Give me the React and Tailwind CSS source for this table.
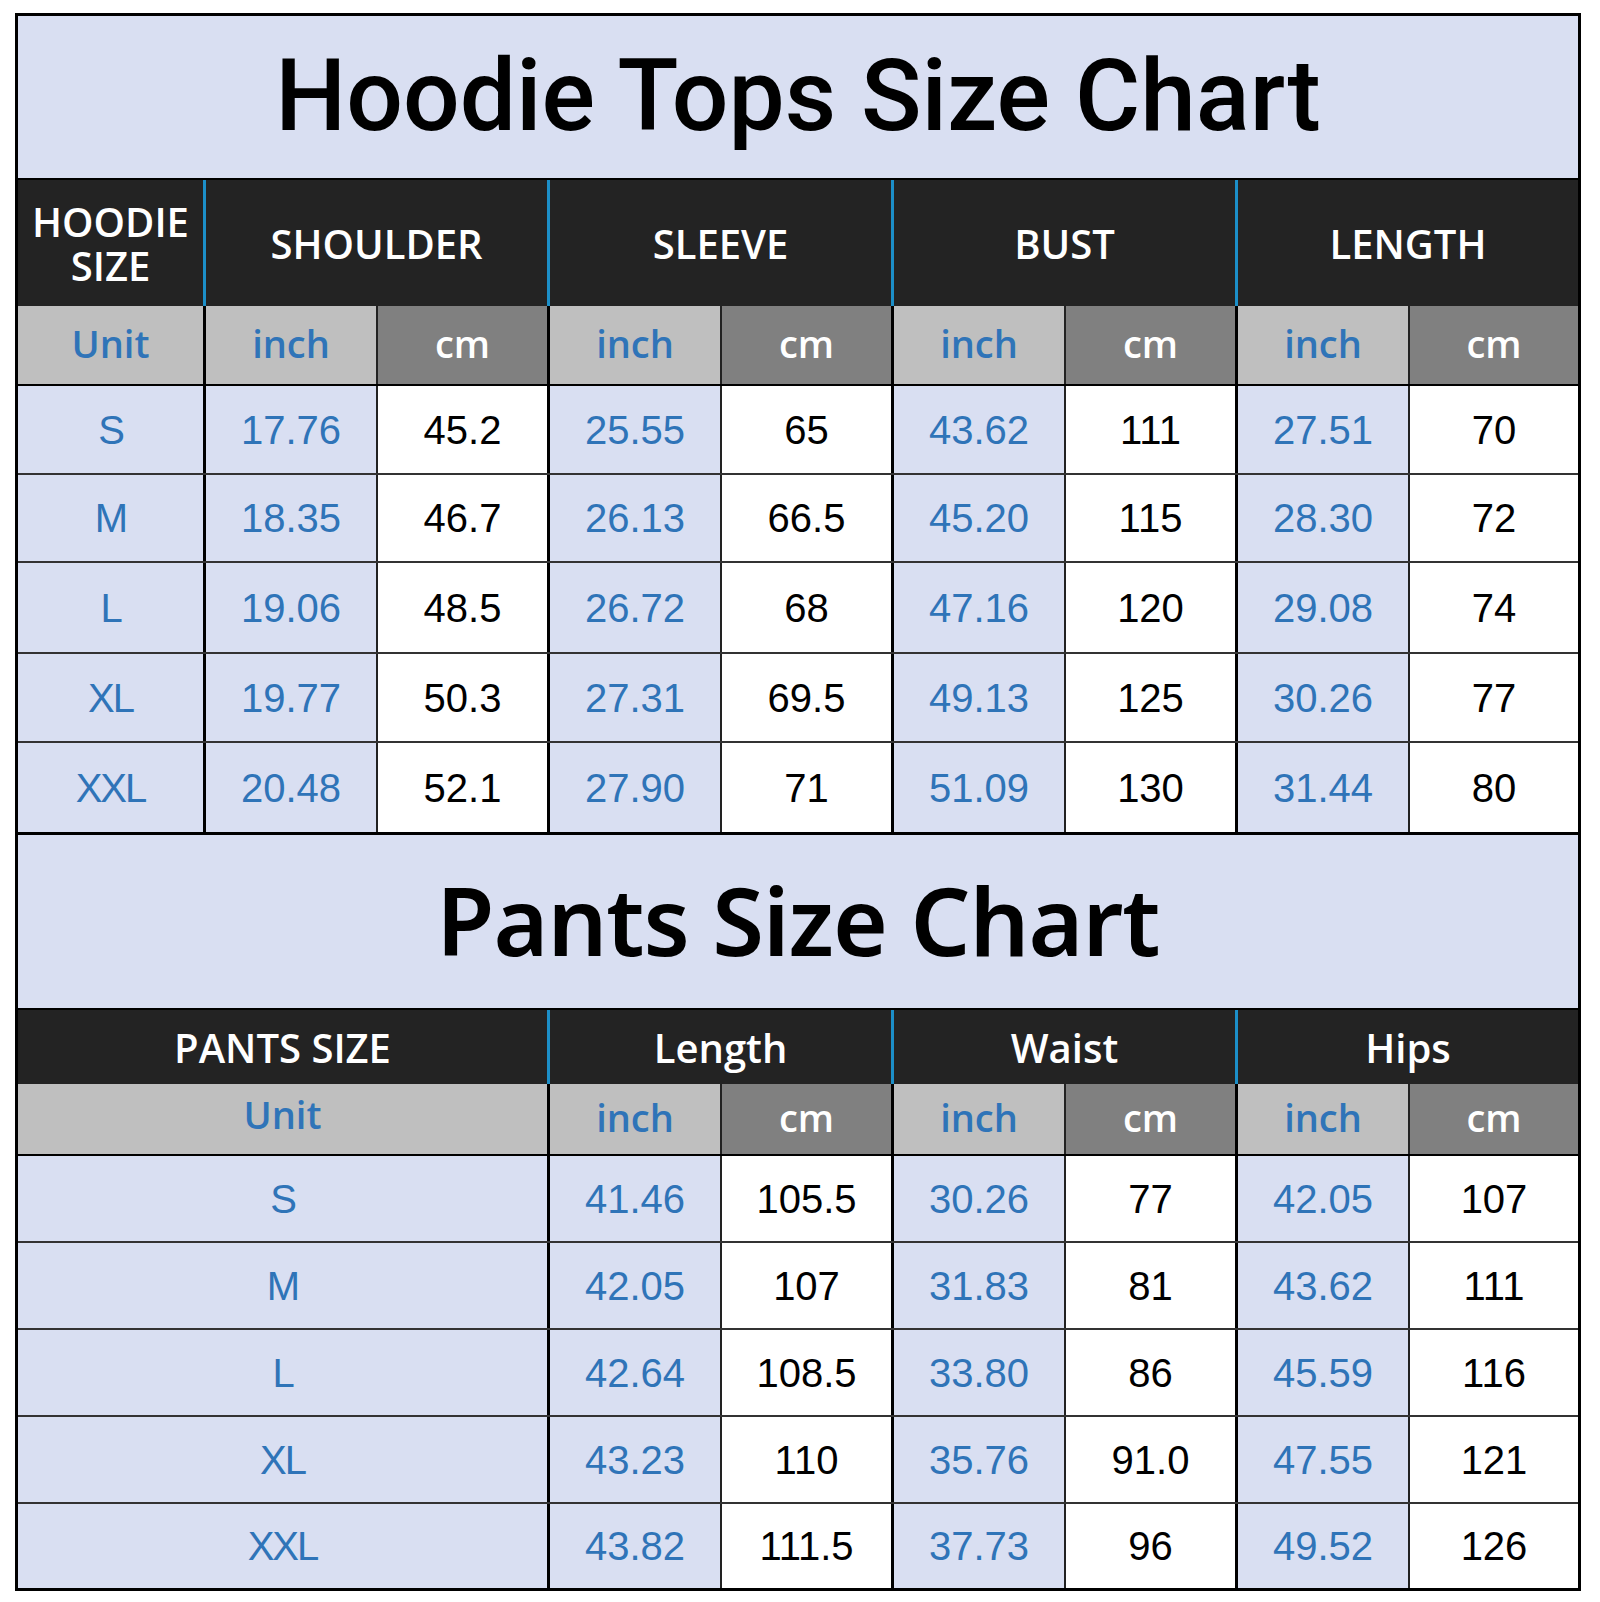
import React from "react";

const COLS =
  "grid grid-cols-[188px_172px_172px_172px_172px_172px_172px_172px_168px]";

const hoodie = [
  ["S", "17.76", "45.2", "25.55", "65", "43.62", "111", "27.51", "70"],
  ["M", "18.35", "46.7", "26.13", "66.5", "45.20", "115", "28.30", "72"],
  ["L", "19.06", "48.5", "26.72", "68", "47.16", "120", "29.08", "74"],
  ["XL", "19.77", "50.3", "27.31", "69.5", "49.13", "125", "30.26", "77"],
  ["XXL", "20.48", "52.1", "27.90", "71", "51.09", "130", "31.44", "80"],
];

const pants = [
  ["S", "41.46", "105.5", "30.26", "77", "42.05", "107"],
  ["M", "42.05", "107", "31.83", "81", "43.62", "111"],
  ["L", "42.64", "108.5", "33.80", "86", "45.59", "116"],
  ["XL", "43.23", "110", "35.76", "91.0", "47.55", "121"],
  ["XXL", "43.82", "111.5", "37.73", "96", "49.52", "126"],
];

const hoodieRowH = [
  "h-[89px] border-b-2 border-[#333]",
  "h-[88px] border-b-2 border-[#333]",
  "h-[91px] border-b-2 border-[#333]",
  "h-[89px] border-b-2 border-[#333]",
  "h-[92px] border-b-[3px] border-black",
];
const pantsRowH = [
  "h-[87px] border-b-2 border-[#333]",
  "h-[87px] border-b-2 border-[#333]",
  "h-[87px] border-b-2 border-[#333]",
  "h-[87px] border-b-2 border-[#333]",
  "h-[84px]",
];

const NUM = "font-['Liberation_Sans',Arial,sans-serif] text-[40px] leading-none";
const HEAD = "font-['Open_Sans',sans-serif] font-semibold text-[40px] leading-[45px] text-white";
const UNIT = "font-['Open_Sans',sans-serif] font-semibold text-[38px] leading-none";

const center = "flex items-center justify-center";

function HeadCell({ children, span, last }) {
  return (
    <div
      className={`${center} flex-col ${span} ${
        last ? "" : "border-r-[3px] border-[#1c8fc8]"
      } text-center`}
    >
      {children}
    </div>
  );
}

function UnitPair({ last }) {
  return (
    <>
      <div className={`${center} bg-[#bfbfbf] border-r-2 border-[#222]`}>
        <span className={`${UNIT} text-[#2f74b8] pb-[4px]`}>inch</span>
      </div>
      <div
        className={`${center} bg-[#808080] ${
          last ? "" : "border-r-[3px] border-black"
        }`}
      >
        <span className={`${UNIT} text-white pb-[4px]`}>cm</span>
      </div>
    </>
  );
}

function DataPair({ inch, cm, last }) {
  return (
    <>
      <div className={`${center} bg-[#d9dff2] border-r-2 border-[#222]`}>
        <span className={`${NUM} text-[#2f74b8]`}>{inch}</span>
      </div>
      <div
        className={`${center} bg-white ${
          last ? "" : "border-r-[3px] border-black"
        }`}
      >
        <span className={`${NUM} text-black`}>{cm}</span>
      </div>
    </>
  );
}

export default function App() {
  return (
    <div className="bg-white w-[1600px] h-[1602px] pl-[15px] pt-[13px]">
      <div className="w-[1566px] border-[3px] border-black bg-[#d9dff2]">
        {/* Hoodie title */}
        <div className={`h-[164px] ${center} border-b-2 border-black bg-[#d9dff2]`}>
          <span className="font-['Roboto',sans-serif] font-medium text-[100px] leading-none text-black pb-[2px]">
            Hoodie Tops Size Chart
          </span>
        </div>

        {/* Hoodie header */}
        <div className={`${COLS} h-[126px] bg-[#232323]`}>
          <HeadCell span="">
            <span className={`${HEAD} block h-[44px] leading-[44px]`}>HOODIE</span>
            <span className={`${HEAD} block h-[44px] leading-[44px]`}>SIZE</span>
          </HeadCell>
          <HeadCell span="col-span-2">
            <span className={HEAD}>SHOULDER</span>
          </HeadCell>
          <HeadCell span="col-span-2">
            <span className={HEAD}>SLEEVE</span>
          </HeadCell>
          <HeadCell span="col-span-2">
            <span className={HEAD}>BUST</span>
          </HeadCell>
          <HeadCell span="col-span-2" last>
            <span className={HEAD}>LENGTH</span>
          </HeadCell>
        </div>

        {/* Hoodie units */}
        <div className={`${COLS} h-[80px] border-b-2 border-black`}>
          <div className={`${center} bg-[#bfbfbf] border-r-[3px] border-black`}>
            <span className={`${UNIT} text-[#2f74b8] pb-[4px]`}>Unit</span>
          </div>
          <UnitPair />
          <UnitPair />
          <UnitPair />
          <UnitPair last />
        </div>

        {/* Hoodie data */}
        {hoodie.map((r, i) => (
          <div key={r[0]} className={`${COLS} ${hoodieRowH[i]}`}>
            <div className={`${center} bg-[#d9dff2] border-r-[3px] border-black`}>
              <span className={`${NUM} text-[#2f74b8] tracking-[-2px]`}>{r[0]}</span>
            </div>
            <DataPair inch={r[1]} cm={r[2]} />
            <DataPair inch={r[3]} cm={r[4]} />
            <DataPair inch={r[5]} cm={r[6]} />
            <DataPair inch={r[7]} cm={r[8]} last />
          </div>
        ))}

        {/* Pants title */}
        <div className={`h-[175px] ${center} border-b-2 border-black bg-[#d9dff2]`}>
          <span className="font-['Noto_Sans',sans-serif] font-semibold text-[94px] leading-none text-black tracking-[-1px] pb-[4px]">
            Pants Size Chart
          </span>
        </div>

        {/* Pants header */}
        <div className={`${COLS} h-[74px] bg-[#232323]`}>
          <HeadCell span="col-span-3">
            <span className={HEAD}>PANTS SIZE</span>
          </HeadCell>
          <HeadCell span="col-span-2">
            <span className={HEAD}>Length</span>
          </HeadCell>
          <HeadCell span="col-span-2">
            <span className={HEAD}>Waist</span>
          </HeadCell>
          <HeadCell span="col-span-2" last>
            <span className={HEAD}>Hips</span>
          </HeadCell>
        </div>

        {/* Pants units */}
        <div className={`${COLS} h-[72px] border-b-2 border-black`}>
          <div className={`${center} col-span-3 bg-[#bfbfbf] border-r-[3px] border-black`}>
            <span className={`${UNIT} text-[#2f74b8] pb-[10px]`}>Unit</span>
          </div>
          <UnitPair />
          <UnitPair />
          <UnitPair last />
        </div>

        {/* Pants data */}
        {pants.map((r, i) => (
          <div key={r[0]} className={`${COLS} ${pantsRowH[i]}`}>
            <div className={`${center} col-span-3 bg-[#d9dff2] border-r-[3px] border-black`}>
              <span className={`${NUM} text-[#2f74b8] tracking-[-2px]`}>{r[0]}</span>
            </div>
            <DataPair inch={r[1]} cm={r[2]} />
            <DataPair inch={r[3]} cm={r[4]} />
            <DataPair inch={r[5]} cm={r[6]} last />
          </div>
        ))}
      </div>
    </div>
  );
}
